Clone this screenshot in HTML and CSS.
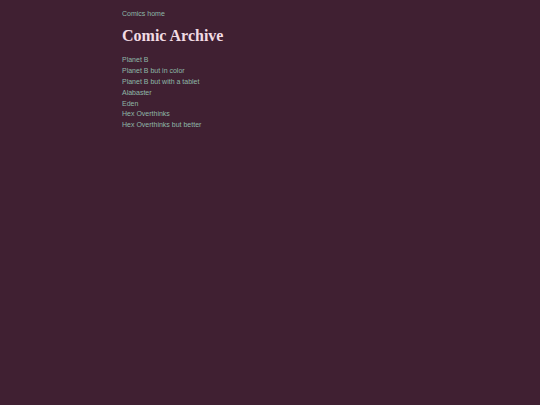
FILE: index.html
```html
<!DOCTYPE html>
<html>
<head>
<meta charset="utf-8">
<link rel="stylesheet" href="styles.css">
</head>
<body>
<div class="page">
  <nav class="top"><a href="#">Comics home</a></nav>
  <h1 class="title">Comic Archive</h1>
  <ul class="list">
    <li><a href="#">Planet B</a></li>
    <li><a href="#">Planet B but in color</a></li>
    <li><a href="#">Planet B but with a tablet</a></li>
    <li><a href="#">Alabaster</a></li>
    <li><a href="#">Eden</a></li>
    <li><a href="#">Hex Overthinks</a></li>
    <li><a href="#">Hex Overthinks but better</a></li>
  </ul>
</div>
</body>
</html>
```
FILE: styles.css
```css
html, body {
  margin: 0;
  padding: 0;
  background: #402032;
  height: 100%;
}
body {
  font-family: "Liberation Sans", Arial, sans-serif;
  font-size: 7px;
  line-height: 10.8px;
}
.page {
  width: 296px;
  margin: 0 auto;
  padding-top: 9px;
}
a {
  color: #8fb8a8;
  text-decoration: none;
}
.top {
  margin: 0;
}
.title {
  font-family: "Liberation Serif", "Times New Roman", serif;
  font-weight: bold;
  font-size: 16px;
  line-height: 16px;
  color: #f2dbe3;
  margin: 8.5px 0 11.2px;
}
.list {
  list-style: none;
  margin: 0;
  padding: 0;
}
```
